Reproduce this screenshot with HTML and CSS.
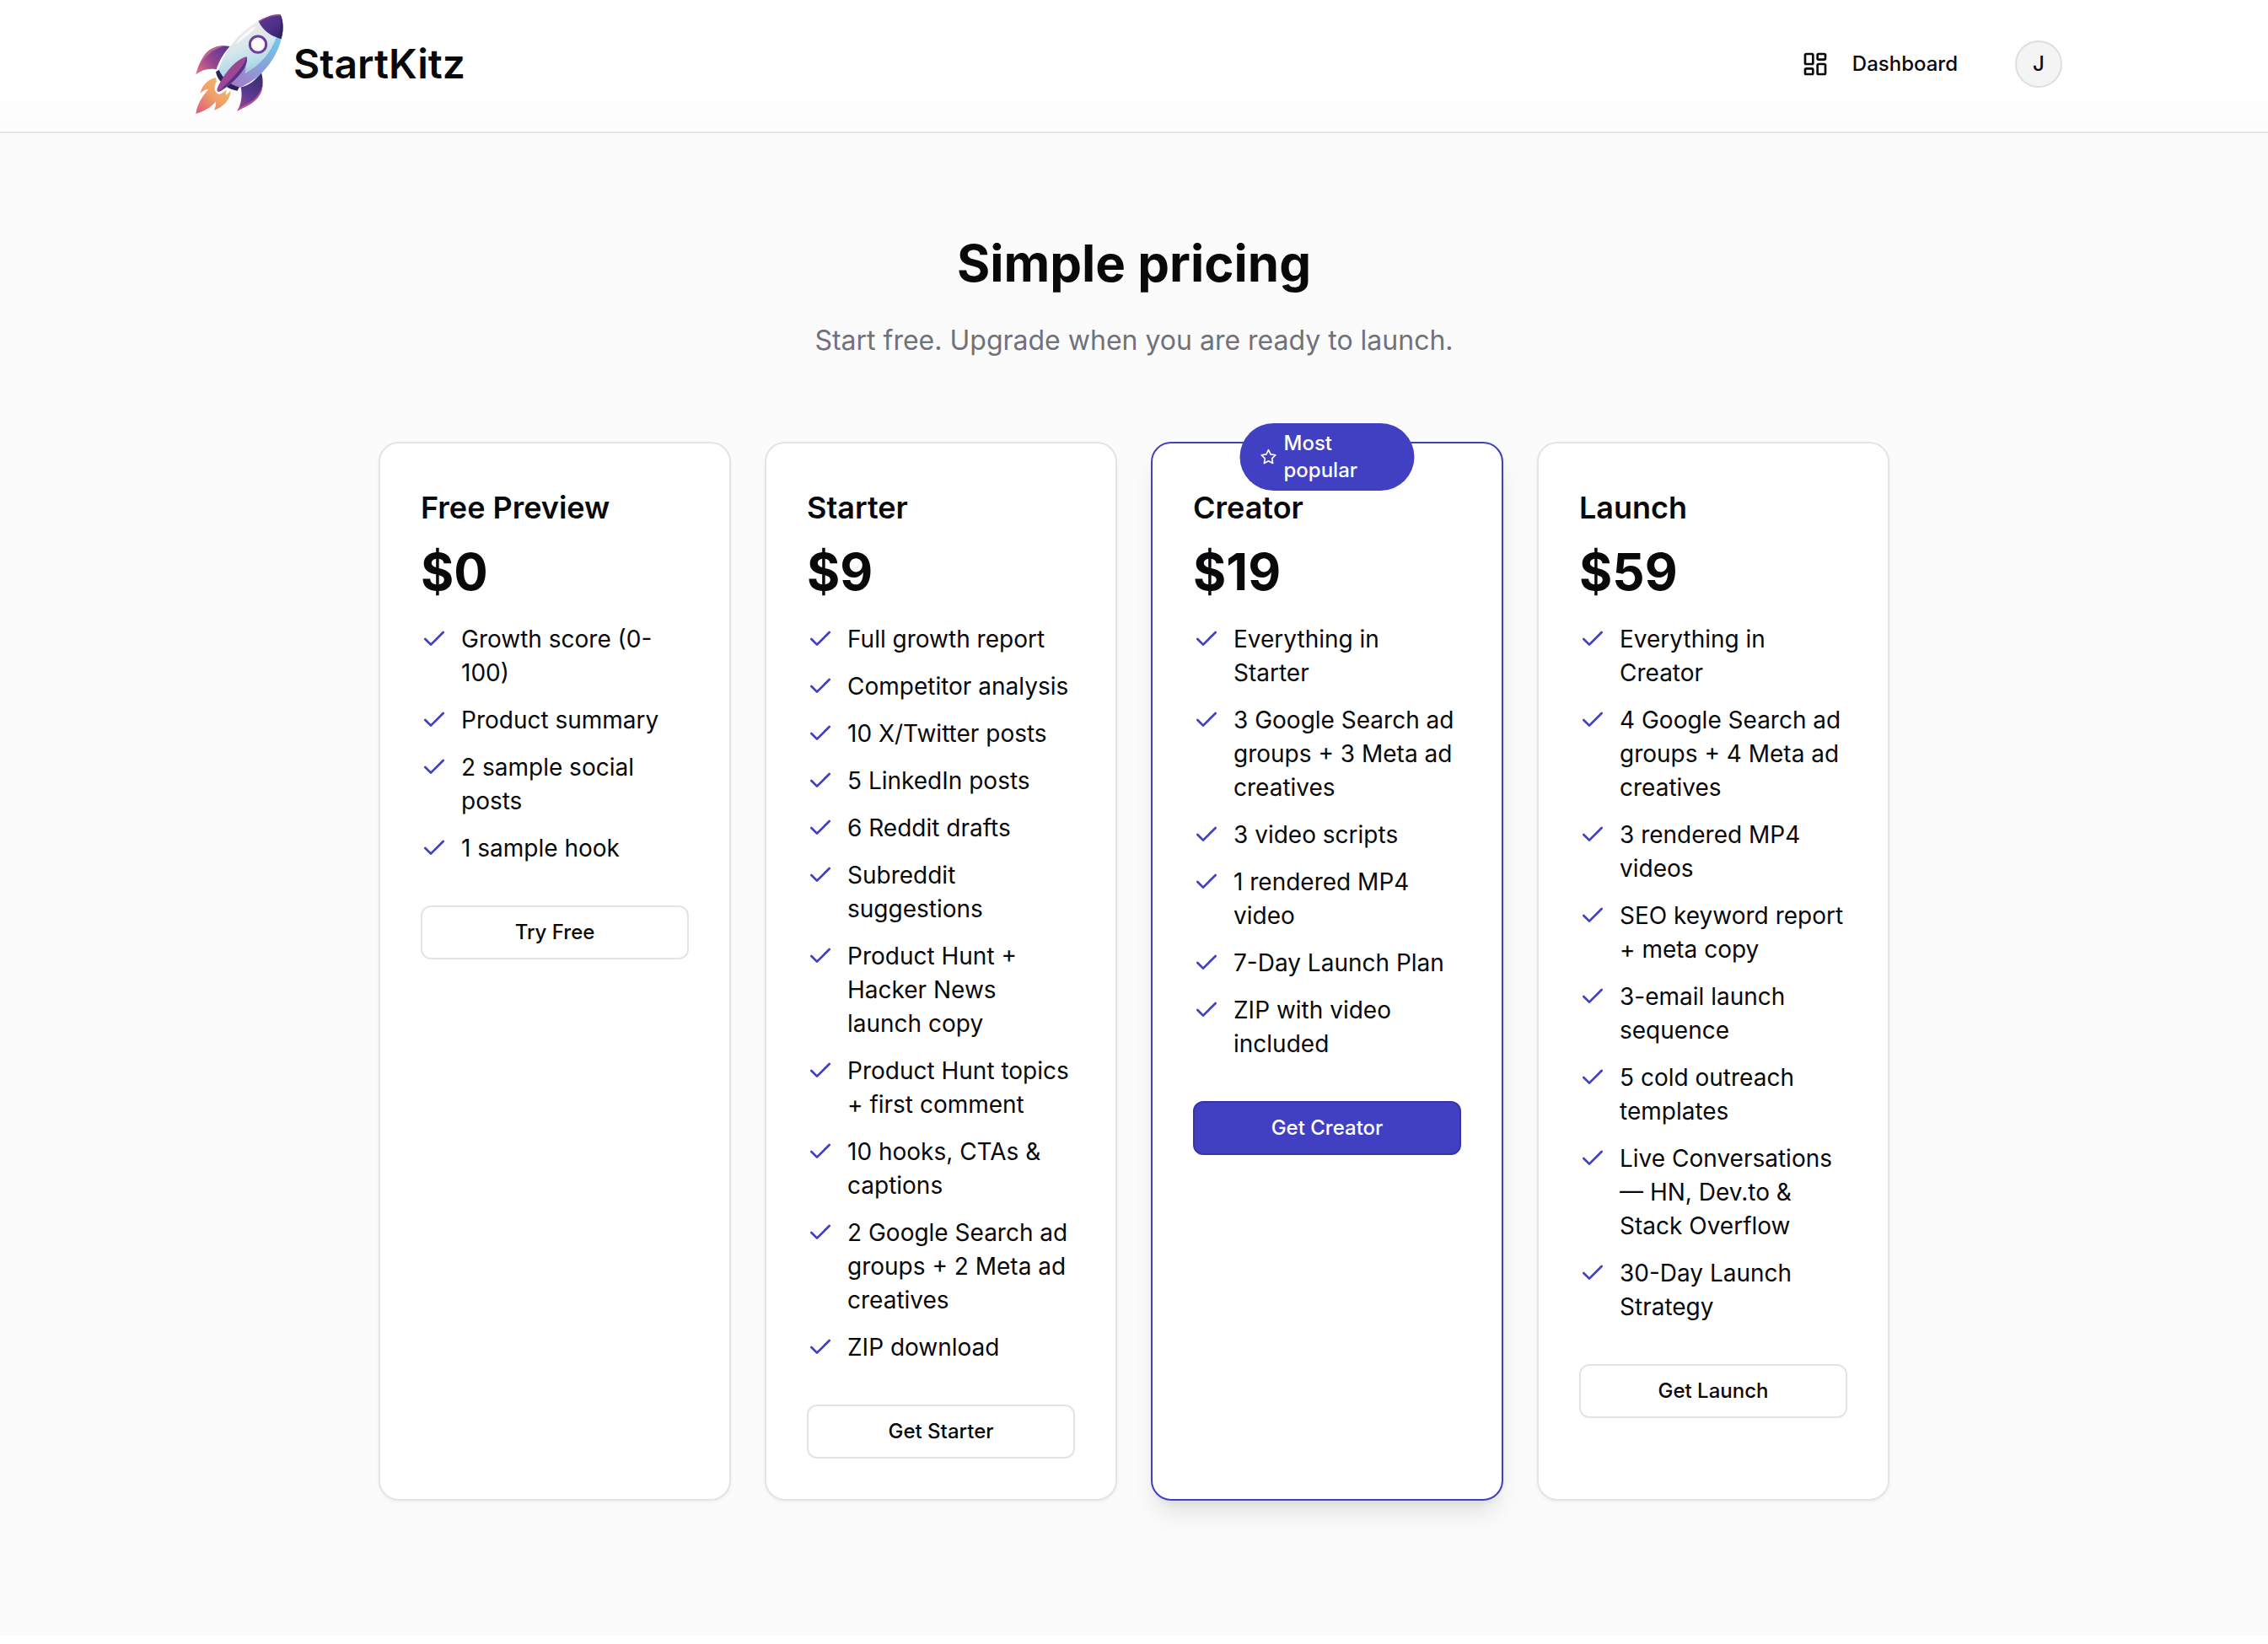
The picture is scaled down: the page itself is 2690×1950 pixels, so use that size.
FILE: index.html
```html
<!DOCTYPE html>
<html lang="en">

<head>
	<meta charset="UTF-8"/>
	<meta name="viewport" content="width=device-width, initial-scale=1.0"/>
	<title>StartKitz - Pricing</title>
	<link rel="stylesheet" href="styles.css">
</head>

<body>
<!-- shared icons -->
<svg class="sprite" aria-hidden="true">
	<symbol id="check" viewBox="0 0 24 24">
		<path d="M20 6 9 17l-5-5"/>
	</symbol>
</svg>

<header class="header">
	<div class="header-inner">
		<a class="brand" href="#">
			<svg class="brand-logo" viewBox="66 48 312 360" aria-hidden="true">
				<defs>
					<linearGradient id="body" gradientUnits="userSpaceOnUse" x1="220" y1="110" x2="280" y2="290">
						<stop offset="0" stop-color="#e9e9e7"/>
						<stop offset="0.35" stop-color="#d5e7ec"/>
						<stop offset="0.65" stop-color="#b4dbe8"/>
						<stop offset="1" stop-color="#9fa6d8"/>
					</linearGradient>
					<linearGradient id="side" gradientUnits="userSpaceOnUse" x1="365" y1="140" x2="215" y2="310">
						<stop offset="0" stop-color="#74c8ea"/>
						<stop offset="0.45" stop-color="#85a6dc"/>
						<stop offset="1" stop-color="#a37dc8"/>
					</linearGradient>
					<linearGradient id="nose" gradientUnits="userSpaceOnUse" x1="310" y1="60" x2="360" y2="135">
						<stop offset="0" stop-color="#5b3590"/>
						<stop offset="0.5" stop-color="#4f3089"/>
						<stop offset="1" stop-color="#372569"/>
					</linearGradient>
					<linearGradient id="fin-left" gradientUnits="userSpaceOnUse" x1="170" y1="170" x2="72" y2="260">
						<stop offset="0" stop-color="#5d3994"/>
						<stop offset="0.5" stop-color="#96448f"/>
						<stop offset="1" stop-color="#e0708a"/>
					</linearGradient>
					<linearGradient id="fin-right" gradientUnits="userSpaceOnUse" x1="295" y1="275" x2="220" y2="392">
						<stop offset="0" stop-color="#3a2d72"/>
						<stop offset="0.55" stop-color="#5c3a93"/>
						<stop offset="1" stop-color="#9a478f"/>
					</linearGradient>
					<linearGradient id="flame" gradientUnits="userSpaceOnUse" x1="165" y1="295" x2="75" y2="395">
						<stop offset="0" stop-color="#f0b768"/>
						<stop offset="0.45" stop-color="#efa069"/>
						<stop offset="1" stop-color="#e0617a"/>
					</linearGradient>
				</defs>
				<path fill="url(#flame)" d="M138 277C115 280 92 298 82 332C91 323 102 318 111 318C92 341 72 368 67 405C95 397 121 383 138 361C139 374 136 384 132 392C162 381 190 357 191 323C186 326 181 333 174 338C173 331 174 325 177 320C168 325 161 332 150 335C129 331 131 301 141 291Z"/>
				<path fill="url(#fin-left)" d="M188 165C150 158 115 170 95 200C80 222 72 245 67 265C90 247 115 242 140 247C148 220 165 190 188 165Z"/>
				<path fill="#c0628f" d="M172 163C135 162 110 176 95 200C83 219 74 240 67 265C82 218 116 176 172 163Z"/>
				<path fill="url(#fin-right)" d="M300 258C310 295 305 325 285 350C265 372 240 380 214 395C229 370 233 340 227 310C255 305 280 285 300 258Z"/>
				<path fill="#b9568f" d="M305 300C304 324 296 338 285 350C265 372 240 380 214 395L219 385C262 365 292 350 305 300Z"/>
				<path fill="url(#body)" d="M290 75C230 110 175 165 147 248C160 280 185 300 222 311C290 285 350 220 371 138C335 130 305 110 290 75Z"/>
				<path fill="url(#side)" d="M371 138L353 133C335 185 300 230 242 262L246 226L184 293C195 302 208 307 222 311C290 285 350 220 371 138Z"/>
				<path fill="#fff" opacity="0.75" d="M280 92C253 106 224 132 209 156C217 156 270 112 280 97Z"/>
				<path fill="url(#nose)" d="M290 75C315 60 345 49 368 52C378 75 380 105 371 138C335 130 305 110 290 75Z"/>
				<path fill="#99468f" d="M290 75C315 60 345 49 368 52L367 57C340 56 315 64 292 80Z"/>
				<path fill="#352463" d="M368 52C378 75 380 105 371 138L357 134C369 108 372 80 368 52Z"/>
				<path fill="#2a2356" d="M138 256L149 248C161 277 186 300 221 310L215 323C181 320 144 290 138 256Z"/>
				<path fill="#fff" d="M140 322C139 330 146 334 156 328L176 314L166 308Z"/>
				<path fill="#9b4793" d="M246 202C207 213 167 262 144 312C139 324 144 330 153 325C194 301 254 245 248 203Z"/>
				<path fill="#553389" d="M247 203C236 245 190 281 148 327C190 303 257 245 248 203Z"/>
				<circle cx="288" cy="158" r="29" fill="#fbfbfb" stroke="#6c4099" stroke-width="9"/>
			</svg>
			<span class="brand-name">StartKitz</span>
		</a>
		<nav class="nav">
			<a class="nav-link" href="#">
				<svg class="icon" viewBox="0 0 24 24" aria-hidden="true">
					<rect x="3" y="3" width="7" height="9" rx="1"/>
					<rect x="14" y="3" width="7" height="5" rx="1"/>
					<rect x="14" y="12" width="7" height="9" rx="1"/>
					<rect x="3" y="16" width="7" height="5" rx="1"/>
				</svg>
				Dashboard
			</a>
			<button class="avatar" type="button">J</button>
		</nav>
	</div>
</header>

<main class="pricing">
	<h1>Simple pricing</h1>
	<p class="subtitle">Start free. Upgrade when you are ready to launch.</p>

	<div class="plans">
		<section class="plan">
			<h2>Free Preview</h2>
			<p class="price">$0</p>
			<ul class="features">
				<li><svg class="icon"><use href="#check"/></svg><span>Growth score (0-100)</span></li>
				<li><svg class="icon"><use href="#check"/></svg><span>Product summary</span></li>
				<li><svg class="icon"><use href="#check"/></svg><span>2 sample social posts</span></li>
				<li><svg class="icon"><use href="#check"/></svg><span>1 sample hook</span></li>
			</ul>
			<button class="btn" type="button">Try Free</button>
		</section>

		<section class="plan">
			<h2>Starter</h2>
			<p class="price">$9</p>
			<ul class="features">
				<li><svg class="icon"><use href="#check"/></svg><span>Full growth report</span></li>
				<li><svg class="icon"><use href="#check"/></svg><span>Competitor analysis</span></li>
				<li><svg class="icon"><use href="#check"/></svg><span>10 X/Twitter posts</span></li>
				<li><svg class="icon"><use href="#check"/></svg><span>5 LinkedIn posts</span></li>
				<li><svg class="icon"><use href="#check"/></svg><span>6 Reddit drafts</span></li>
				<li><svg class="icon"><use href="#check"/></svg><span>Subreddit suggestions</span></li>
				<li><svg class="icon"><use href="#check"/></svg><span>Product Hunt + Hacker News launch copy</span></li>
				<li><svg class="icon"><use href="#check"/></svg><span>Product Hunt topics + first comment</span></li>
				<li><svg class="icon"><use href="#check"/></svg><span>10 hooks, CTAs &amp; captions</span></li>
				<li><svg class="icon"><use href="#check"/></svg><span>2 Google Search ad groups + 2 Meta ad creatives</span></li>
				<li><svg class="icon"><use href="#check"/></svg><span>ZIP download</span></li>
			</ul>
			<button class="btn" type="button">Get Starter</button>
		</section>

		<section class="plan popular">
			<div class="badge">
				<svg class="icon" viewBox="0 0 24 24" aria-hidden="true">
					<path d="M12 2l3.09 6.26L22 9.27l-5 4.87 1.18 6.88L12 17.77l-6.18 3.25L7 14.14 2 9.27l6.91-1.01L12 2z"/>
				</svg>
				<span>Most popular</span>
			</div>
			<h2>Creator</h2>
			<p class="price">$19</p>
			<ul class="features">
				<li><svg class="icon"><use href="#check"/></svg><span>Everything in Starter</span></li>
				<li><svg class="icon"><use href="#check"/></svg><span>3 Google Search ad groups + 3 Meta ad creatives</span></li>
				<li><svg class="icon"><use href="#check"/></svg><span>3 video scripts</span></li>
				<li><svg class="icon"><use href="#check"/></svg><span>1 rendered MP4 video</span></li>
				<li><svg class="icon"><use href="#check"/></svg><span>7-Day Launch Plan</span></li>
				<li><svg class="icon"><use href="#check"/></svg><span>ZIP with video included</span></li>
			</ul>
			<button class="btn btn-primary" type="button">Get Creator</button>
		</section>

		<section class="plan">
			<h2>Launch</h2>
			<p class="price">$59</p>
			<ul class="features">
				<li><svg class="icon"><use href="#check"/></svg><span>Everything in Creator</span></li>
				<li><svg class="icon"><use href="#check"/></svg><span>4 Google Search ad groups + 4 Meta ad creatives</span></li>
				<li><svg class="icon"><use href="#check"/></svg><span>3 rendered MP4 videos</span></li>
				<li><svg class="icon"><use href="#check"/></svg><span>SEO keyword report + meta copy</span></li>
				<li><svg class="icon"><use href="#check"/></svg><span>3-email launch sequence</span></li>
				<li><svg class="icon"><use href="#check"/></svg><span>5 cold outreach templates</span></li>
				<li><svg class="icon"><use href="#check"/></svg><span>Live Conversations — HN, Dev.to &amp; Stack Overflow</span></li>
				<li><svg class="icon"><use href="#check"/></svg><span>30-Day Launch Strategy</span></li>
			</ul>
			<button class="btn" type="button">Get Launch</button>
		</section>
	</div>
</main>
</body>

</html>
```
FILE: styles.css
```css
* {
	box-sizing: border-box;
}

body {
	margin: 0;
	background: #fff;
	color: #09090b;
	font-family: Inter, "Liberation Sans", sans-serif;
	font-size: 28px;
	line-height: 40px;
}

h1, h2, p, ul {
	margin: 0;
	padding: 0;
}

a {
	color: inherit;
	text-decoration: none;
}

button {
	font-family: inherit;
	font-size: 24px;
	font-weight: 500;
	line-height: 32px;
	color: inherit;
	cursor: pointer;
}

.sprite {
	display: none;
}

.icon {
	flex: none;
	width: 32px;
	height: 32px;
	fill: none;
	stroke: currentColor;
	stroke-width: 2;
	stroke-linecap: round;
	stroke-linejoin: round;
}

/* header */
.header {
	border-bottom: 2px solid #e4e4e5;
	background: linear-gradient(#fff 60%, #fcfcfc);
}

.header-inner {
	display: flex;
	align-items: center;
	justify-content: space-between;
	max-width: 2304px;
	margin: 0 auto;
	padding: 16px 51px 20px 39px;
}

.brand {
	display: flex;
	align-items: center;
	gap: 12px;
}

.brand-logo {
	width: 104px;
	height: 120px;
}

.brand-name {
	font-size: 48px;
	font-weight: 600;
	line-height: 64px;
}

.nav {
	display: flex;
	align-items: center;
	gap: 68px;
}

.nav-link {
	display: flex;
	align-items: center;
	gap: 28px;
	font-size: 24px;
	font-weight: 500;
	line-height: 32px;
}

.avatar {
	width: 56px;
	height: 56px;
	padding: 0;
	border: 2px solid #dededf;
	border-radius: 50%;
	background: #f4f4f5;
}

/* pricing */
.pricing {
	padding: 118px 48px 160px;
	background: #fbfbfb;
}

.pricing h1 {
	margin-bottom: 32px;
	font-size: 60px;
	font-weight: 700;
	line-height: 72px;
	text-align: center;
}

.subtitle {
	margin-bottom: 96px;
	color: #71717a;
	font-size: 32px;
	line-height: 48px;
	text-align: center;
}

.plans {
	display: grid;
	grid-template-columns: repeat(4, 1fr);
	gap: 40px;
	max-width: 1792px;
	margin: 0 auto;
}

.plan {
	position: relative;
	padding: 48px;
	border: 2px solid #e4e4e5;
	border-radius: 24px;
	background: #fff;
	box-shadow: 0 2px 4px rgba(0, 0, 0, 0.05);
}

.plan h2 {
	margin-bottom: 12px;
	font-size: 36px;
	font-weight: 600;
	line-height: 56px;
}

.price {
	margin-bottom: 24px;
	font-size: 60px;
	font-weight: 700;
	line-height: 72px;
}

.features {
	display: flex;
	flex-direction: column;
	gap: 16px;
	margin-bottom: 48px;
	list-style: none;
}

.features li {
	display: flex;
	gap: 16px;
}

.features .icon {
	margin-top: 4px;
	color: #4240c2;
}

.btn {
	display: block;
	width: 100%;
	height: 64px;
	border: 2px solid #e4e4e5;
	border-radius: 12px;
	background: #fff;
}

.btn-primary {
	border-color: #3834a8;
	background: #4240c2;
	color: #fff;
}

/* highlighted plan */
.popular {
	border-color: #4240c2;
	box-shadow: 0 20px 30px -6px rgba(0, 0, 0, 0.1), 0 8px 12px -8px rgba(0, 0, 0, 0.1);
}

.badge {
	position: absolute;
	top: -24px;
	left: 50%;
	display: flex;
	align-items: center;
	gap: 8px;
	width: 50%;
	padding: 8px 24px;
	border-radius: 40px;
	background: #4240c2;
	color: #fff;
	font-size: 24px;
	font-weight: 500;
	line-height: 32px;
	transform: translateX(-50%);
}

.badge .icon {
	width: 20px;
	height: 20px;
}
```
